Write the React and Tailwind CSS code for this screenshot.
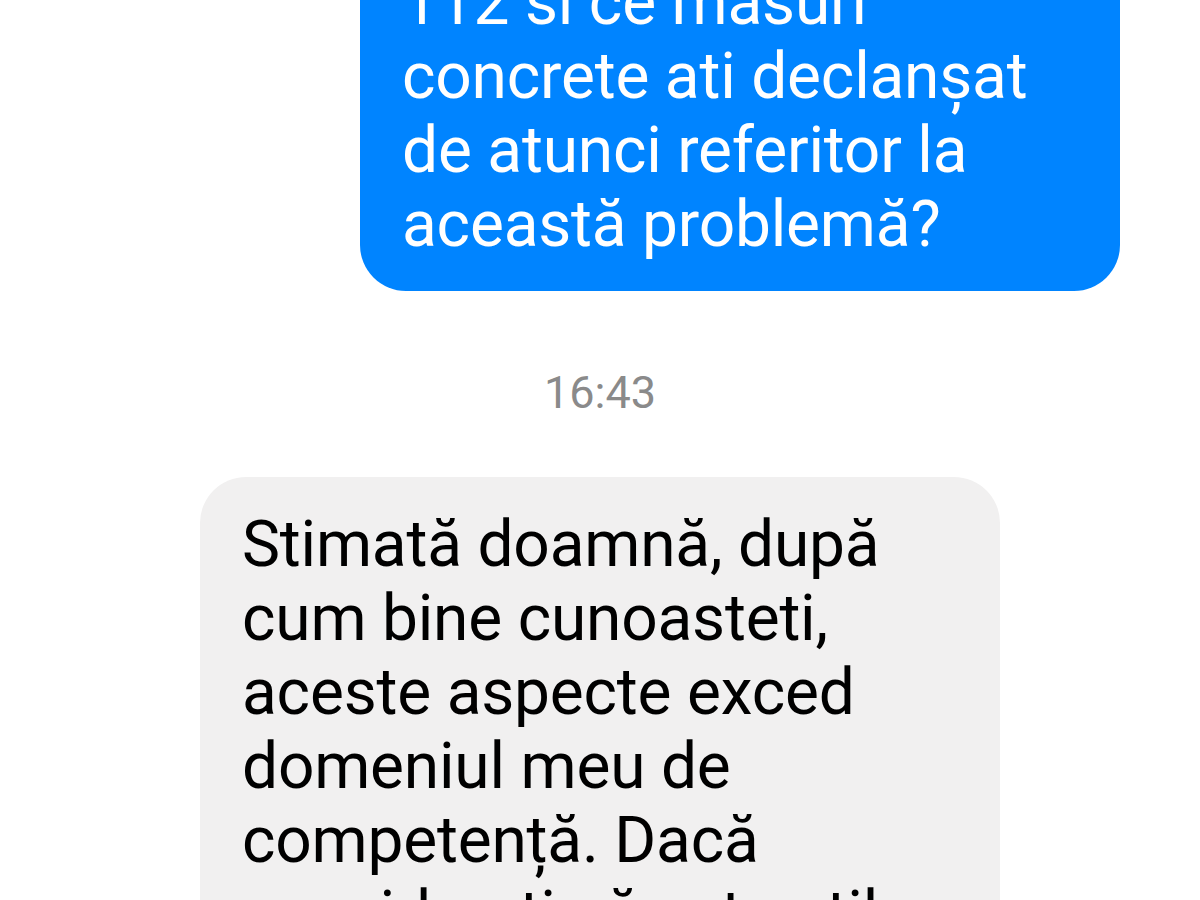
export default function App() {
  return (
    <div className="w-[1200px] h-[900px] overflow-hidden bg-white" style={{ fontFamily: 'Roboto, "Noto Sans", sans-serif' }}>
      <div className="flex flex-col mt-[-63px]">
        <div className="flex justify-end pr-[80px]">
          <div className="w-[760px] bg-[#0084ff] text-white rounded-[46px] pl-[42px] pr-[20px] pt-[29px] pb-[29px] text-[64px] leading-[74px] tracking-[-0.2px]">
            112 si ce măsuri<br />
            concrete ati declanșat<br />
            de atunci referitor la<br />
            această problemă?
          </div>
        </div>
        <div className="flex justify-center mt-[77px] text-[45px] leading-[50px] text-[#8a8a8a]">16:43</div>
        <div className="flex justify-start pl-[200px] mt-[59px]">
          <div className="w-[800px] bg-[#f1f0f0] text-black rounded-[46px] pl-[42px] pr-[20px] pt-[31px] pb-[29px] text-[64px] leading-[74px] tracking-[-0.2px]">
            Stimată doamnă, după<br />
            cum bine cunoasteti,<br />
            aceste aspecte exced<br />
            domeniul meu de<br />
            competență. Dacă<br />
            considerați că este util
          </div>
        </div>
      </div>
    </div>
  );
}
